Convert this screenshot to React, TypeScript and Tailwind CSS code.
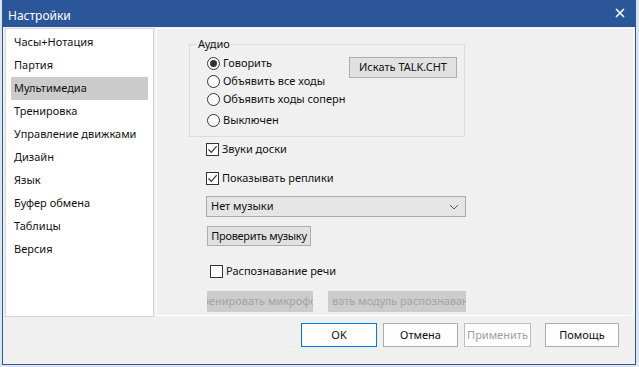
import React from "react";

const font = { fontFamily: '"Noto Sans", "Open Sans", sans-serif' };

const sections = [
  "Часы+Нотация",
  "Партия",
  "Мультимедиа",
  "Тренировка",
  "Управление движками",
  "Дизайн",
  "Язык",
  "Буфер обмена",
  "Таблицы",
  "Версия",
];

function Radio({ checked, label, h }: { checked?: boolean; label: string; h: string }) {
  return (
    <div className={`flex items-center gap-[3px] ${h}`}>
      <span className="shrink-0 w-[13px] h-[13px] rounded-full border border-[#333] bg-white flex items-center justify-center">
        {checked && <span className="w-[7px] h-[7px] rounded-full bg-[#333]" />}
      </span>
      <span>{label}</span>
    </div>
  );
}

function Check({ checked, label }: { checked?: boolean; label: string }) {
  return (
    <div className="flex items-center gap-[3px] h-[16px]">
      <span className="shrink-0 w-[13px] h-[13px] border border-[#333] bg-white flex items-center justify-center">
        {checked && (
          <svg width="11" height="11" viewBox="0 0 11 11">
            <path d="M1.5 5.5 L4.3 8.3 L9.7 2.2" fill="none" stroke="#333" strokeWidth="1.2" />
          </svg>
        )}
      </span>
      <span>{label}</span>
    </div>
  );
}

export default function App() {
  return (
    <div className="w-[639px] h-[367px] bg-[#dbe5f1] overflow-hidden text-[11px] text-[#111]" style={font}>
      <div className="ml-[2px] w-[634px] h-[365px] flex flex-col border-x border-b border-[#2b579a] bg-[#f0f0f0]">
        {/* title bar */}
        <div className="h-[27px] bg-[#2b579a] flex items-center justify-between pl-[6px] pr-[11px] text-white text-[12px] -mx-px">
          <span className="pt-[4px]">Настройки</span>
          <svg width="10" height="10" viewBox="0 0 10 10" className="-mt-[1px]">
            <path d="M1 1 L9 9 M9 1 L1 9" stroke="#fff" strokeWidth="1.6" />
          </svg>
        </div>

        <div className="flex mt-[1px] ml-[2px] mr-[1px] h-[289px]">
          {/* section list */}
          <div className="w-[149px] bg-white border border-[#d5d5d5] pt-[2px] px-[5px]">
            {sections.map((s) => (
              <div
                key={s}
                className={`h-[23px] pl-[3px] flex items-center ${s === "Мультимедиа" ? "bg-[#cccccc]" : ""}`}
              >
                {s}
              </div>
            ))}
          </div>

          {/* multimedia page */}
          <div className="flex-1 ml-[2px] border border-white pt-[7px] h-[288px]">
            <fieldset className="ml-[32px] w-[276px] border border-[#dcdcdc] pl-[7px] pb-[4px]">
              <legend className="px-[1px] leading-[16px]">Аудио</legend>
              <div className="flex pl-[10px] pt-[2px]">
                <div className="w-[142px] whitespace-nowrap">
                  <Radio checked label="Говорить" h="h-[18px]" />
                  <Radio label="Объявить все ходы" h="h-[19px]" />
                  <Radio label="Объявить ходы соперн" h="h-[17px]" />
                  <Radio label="Выключен" h="h-[24px]" />
                </div>
                <button className="mt-[3px] w-[108px] h-[21px] bg-[#e1e1e1] border border-[#adadad] flex items-center justify-center">
                  Искать TALK.CHT
                </button>
              </div>
            </fieldset>

            <div className="ml-[49px] mt-[4px]">
              <Check checked label="Звуки доски" />
            </div>
            <div className="ml-[49px] mt-[13px]">
              <Check checked label="Показывать реплики" />
            </div>

            <div className="ml-[49px] mt-[10px] w-[260px] h-[21px] bg-[#e5e5e5] border border-[#acacac] flex items-center justify-between pl-[4px] pr-[6px]">
              <span>Нет музыки</span>
              <svg width="10" height="6" viewBox="0 0 10 6">
                <path d="M1 1 L5 5 L9 1" fill="none" stroke="#555" strokeWidth="1" />
              </svg>
            </div>

            <button className="ml-[50px] mt-[9px] w-[104px] h-[20px] bg-[#e1e1e1] border border-[#adadad] flex items-center justify-center whitespace-nowrap tracking-[-0.3px]">
              Проверить музыку
            </button>

            <div className="ml-[53px] mt-[17px]">
              <Check label="Распознавание речи" />
            </div>

            <div className="ml-[50px] mt-[12px] flex gap-[15px] text-[#a3a3a3]">
              <div className="w-[106px] h-[21px] bg-[#cccccc] flex items-center justify-center overflow-hidden whitespace-nowrap">
                <span className="shrink-0">Тренировать микрофон</span>
              </div>
              <div className="w-[138px] h-[21px] bg-[#cccccc] flex items-center overflow-hidden whitespace-nowrap pl-[4px]">
                <span className="shrink-0">вать модуль распознавания</span>
              </div>
            </div>
          </div>
        </div>

        {/* dialog buttons */}
        <div className="flex justify-end pr-[16px] mt-[6px]">
          <button className="w-[76px] h-[24px] bg-[#fdfdfd] border border-[#0078d7]">OK</button>
          <button className="ml-[6px] w-[75px] h-[24px] bg-[#fdfdfd] border border-[#adadad]">Отмена</button>
          <button className="ml-[6px] w-[67px] h-[24px] bg-[#fdfdfd] border border-[#bfbfbf] text-[#a0a0a0]">
            Применить
          </button>
          <button className="ml-[14px] w-[74px] h-[24px] bg-[#fdfdfd] border border-[#adadad]">Помощь</button>
        </div>
      </div>
    </div>
  );
}
